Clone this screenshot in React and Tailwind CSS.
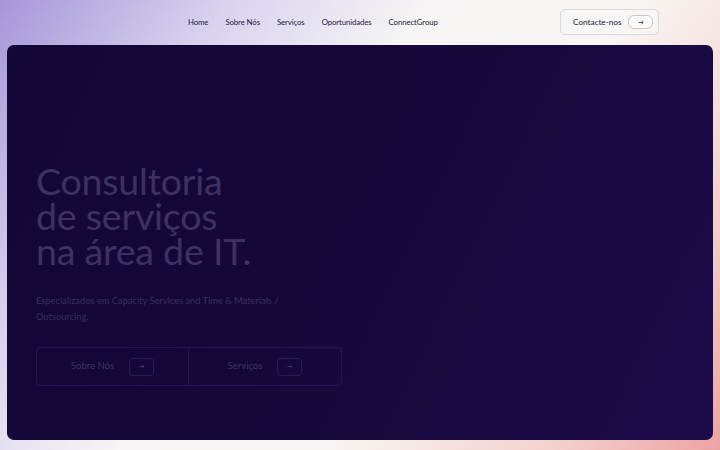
import React from "react";

const navLinks = ["Home", "Sobre Nós", "Serviços", "Oportunidades", "ConnectGroup"];

function Arrow() {
	return (
		<svg width="6" height="5" viewBox="0 0 7 5" fill="none" stroke="currentColor" strokeWidth="0.9">
			<path d="M0.5 2.5h5.5M4 0.7l2 1.8-2 1.8" />
		</svg>
	);
}

export default function App() {
	return (
		<div
			className="w-[720px] h-[450px] overflow-hidden flex flex-col bg-[linear-gradient(125deg,#a696d8_0%,#d9d2ee_22%,#f7f5f5_42%,#f8f5f2_62%,#f3d0cc_84%,#eda2a2_100%)]"
			style={{ fontFamily: "Lato, 'Noto Sans', sans-serif" }}
		>
			{/* Barre de navigation */}
			<header className="h-[45px] flex items-center relative">
				<nav className="flex items-center gap-[17px] ml-[188px] text-[7.8px] tracking-[-0.1px] text-[#1e1848]">
					{navLinks.map((link) => (
						<a key={link} href="#" className="leading-none">
							{link}
						</a>
					))}
				</nav>
				<div className="ml-auto mr-[61px] mb-[1px] w-[99px] h-[26px] rounded-[5px] border border-[#dcdad8] bg-[#f7f6f4] flex items-center pl-[12px] pr-[5px]">
					<span className="text-[8.2px] text-[#1e1848]">Contacte-nos</span>
					<span className="ml-auto w-[25px] h-[14px] rounded-[6px] border border-[#c9c7c6] bg-[#fbfaf9] flex items-center justify-center text-[#2a2450]">
						<Arrow />
					</span>
				</div>
			</header>

			{/* Bloc principal */}
			<main className="mx-[7px] h-[395px] rounded-[7px] bg-[linear-gradient(115deg,#130737_0%,#150839_45%,#1a0a42_75%,#1d0b48_100%)] pl-[29px] pt-[118px]">
				<h1 className="text-[37.5px] leading-[35px] text-[#3d3162] tracking-[-0.2px]">
					Consultoria
					<br />
					de serviços
					<br />
					na área de IT.
				</h1>
				<p className="mt-[25px] text-[9.3px] leading-[16px] text-[#3a2e5f] w-[260px]">
					Especializados em Capacity Services and Time &amp; Materials / Outsourcing.
				</p>
				<div className="mt-[22px] w-[306px] h-[39px] rounded-[4px] border border-[#241454] grid grid-cols-2">
					<div className="flex items-center justify-center gap-[15px] border-r border-[#241454]">
						<span className="text-[9.5px] text-[#3d3264]">Sobre Nós</span>
						<span className="w-[25px] h-[18px] rounded-[4px] border border-[#2a1a5c] flex items-center justify-center text-[#4a3f70]">
							<Arrow />
						</span>
					</div>
					<div className="flex items-center justify-center gap-[15px]">
						<span className="text-[9.5px] text-[#3d3264]">Serviços</span>
						<span className="w-[25px] h-[18px] rounded-[4px] border border-[#2a1a5c] flex items-center justify-center text-[#4a3f70]">
							<Arrow />
						</span>
					</div>
				</div>
			</main>
		</div>
	);
}
